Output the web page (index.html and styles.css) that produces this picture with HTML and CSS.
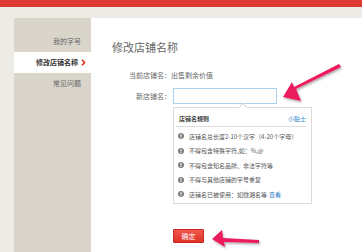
FILE: index.html
```html
<!DOCTYPE html>
<html lang="zh-CN">
<head>
<meta charset="utf-8">
<title>修改店铺名称</title>
<link rel="stylesheet" href="styles.css">
</head>
<body>
<div class="topbar"></div>
<div class="page">
  <aside class="sidebar">
    <div class="nav-item">我的字号</div>
    <div class="nav-item active">修改店铺名称<svg class="chev" width="5" height="7" viewBox="0 0 5 7"><path d="M1 0.8 L3.6 3.5 L1 6.2" fill="none" stroke="#e02b20" stroke-width="1.6"/></svg></div>
    <div class="nav-item">常见问题</div>
  </aside>
  <main class="main">
    <h1 class="title">修改店铺名称</h1>
    <div class="row">
      <span class="label">当前店铺名：</span><span class="value">出售剩余价值</span>
    </div>
    <div class="row row-input">
      <span class="label">新店铺名：</span><input class="name-input" type="text">
    </div>
    <div class="tip">
      <div class="tip-head"><span class="tip-title">店铺名规则</span><span class="tip-link">小贴士</span></div>
      <ul class="tip-list">
        <li><svg class="ico" width="6" height="6" viewBox="0 0 6 6"><circle cx="3" cy="3" r="3" fill="#7d7d7d"/><rect x="2.5" y="1" width="1" height="2.6" fill="#fff"/><rect x="2.5" y="4.1" width="1" height="0.9" fill="#fff"/></svg>店铺名总长度2-10个汉字（4-20个字母）</li>
        <li><svg class="ico" width="6" height="6" viewBox="0 0 6 6"><circle cx="3" cy="3" r="3" fill="#7d7d7d"/><rect x="2.5" y="1" width="1" height="2.6" fill="#fff"/><rect x="2.5" y="4.1" width="1" height="0.9" fill="#fff"/></svg>不得包含特殊字符,如：%,@</li>
        <li><svg class="ico" width="6" height="6" viewBox="0 0 6 6"><circle cx="3" cy="3" r="3" fill="#7d7d7d"/><rect x="2.5" y="1" width="1" height="2.6" fill="#fff"/><rect x="2.5" y="4.1" width="1" height="0.9" fill="#fff"/></svg>不得包含知名品牌、非法字符等</li>
        <li><svg class="ico" width="6" height="6" viewBox="0 0 6 6"><circle cx="3" cy="3" r="3" fill="#7d7d7d"/><rect x="2.5" y="1" width="1" height="2.6" fill="#fff"/><rect x="2.5" y="4.1" width="1" height="0.9" fill="#fff"/></svg>不得与其他店铺的字号重复</li>
        <li><svg class="ico" width="6" height="6" viewBox="0 0 6 6"><circle cx="3" cy="3" r="3" fill="#7d7d7d"/><rect x="2.5" y="1" width="1" height="2.6" fill="#fff"/><rect x="2.5" y="4.1" width="1" height="0.9" fill="#fff"/></svg>店铺名已被使用：如微湘名等 <a class="more">查看</a></li>
      </ul>
    </div>
    <button class="btn" type="button">确定</button>
  </main>
</div>
<svg class="arrows" width="362" height="252" viewBox="0 0 362 252">
  <defs>
    <filter id="sh" x="-20%" y="-20%" width="140%" height="140%">
      <feDropShadow dx="1" dy="1.5" stdDeviation="1" flood-color="#000" flood-opacity="0.35"/>
    </filter>
  </defs>
  <g filter="url(#sh)" fill="#ec1a5c">
    <polygon points="339,64 341,67 296,89 301,101 283,97 292,82 294,87"/>
    <polygon points="259,240 259,243 224,242 225,247 212,239 222,230 223,238"/>
  </g>
</svg>
</body>
</html>
```
FILE: styles.css
```css
* { box-sizing: border-box; }
html, body { margin: 0; padding: 0; }
body {
  width: 362px;
  height: 252px;
  overflow: hidden;
  position: relative;
  background: #edebe6;
  font-family: "Noto Sans CJK SC", "Noto Sans", sans-serif;
  color: #666;
}
.topbar {
  height: 7px;
  background: #dd3a31;
}
.page {
  display: flex;
  padding-top: 11px;
  height: 245px;
}
.sidebar {
  margin-left: 14px;
  width: 77px;
  background: #d9d5cb;
  padding-top: 13px;
}
.nav-item {
  height: 21px;
  line-height: 21px;
  font-size: 7px;
  text-align: right;
  padding-right: 10px;
  color: #666;
  display: flex;
  align-items: center;
  justify-content: flex-end;
}
.nav-item.active {
  background: #fff;
  color: #333;
  font-weight: bold;
  padding-right: 5px;
}
.chev { margin-left: 3px; display: block; }
.main {
  flex: 1;
  background: #fff;
  padding-left: 21px;
  padding-top: 22px;
}
.title {
  margin: 0;
  font-size: 11px;
  line-height: 14px;
  font-weight: normal;
  color: #666;
}
.row {
  display: flex;
  align-items: center;
  font-size: 7px;
  line-height: 14px;
  margin-top: 14px;
}
.row-input { margin-top: 6px; }
.label {
  width: 59px;
  text-align: right;
  color: #666;
}
.value { color: #666; }
.name-input {
  margin: 0 0 0 2px;
  width: 104px;
  height: 16px;
  border: 1px solid #a9d2ec;
  background: #fff;
  padding: 0;
  outline: none;
}
.tip {
  position: relative;
  margin: 3px 0 0 61px;
  width: 139px;
  border: 1px solid #dcdcdc;
  background: #fff;
  padding: 0 5px 0 2px;
}
.tip::before {
  content: "";
  position: absolute;
  top: -4px;
  left: 66px;
  width: 5px;
  height: 5px;
  background: #fff;
  border-left: 1px solid #dcdcdc;
  border-top: 1px solid #dcdcdc;
  transform: rotate(45deg);
}
.tip-head {
  display: flex;
  justify-content: space-between;
  padding: 5px 0 1px 3px;
  border-bottom: 1px solid #dedede;
  font-size: 6px;
  line-height: 12px;
}
.tip-title { font-weight: bold; color: #444; }
.tip-link { color: #2b82c6; }
.tip-list {
  list-style: none;
  margin: 0;
  padding: 2px 0 1px;
}
.tip-list li {
  display: flex;
  align-items: center;
  height: 14.5px;
  font-size: 6px;
  color: #555;
  white-space: nowrap;
}
.ico { display: block; margin: 0 5px 0 2px; flex: none; }
.more { color: #2b82c6; margin-left: 2px; }
.btn {
  display: block;
  margin: 25px 0 0 61px;
  width: 31px;
  height: 14px;
  padding: 0;
  border: 1px solid #c8291f;
  border-radius: 1px;
  background: linear-gradient(#f0564c, #dd3328);
  color: #fff;
  font-family: inherit;
  font-size: 7px;
  line-height: 12px;
}
.arrows {
  position: absolute;
  left: 0;
  top: 0;
  pointer-events: none;
}
```
